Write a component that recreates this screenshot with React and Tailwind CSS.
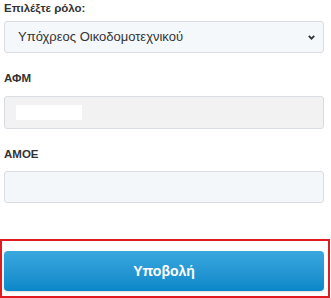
export default function App() {
  return (
    <div className="w-[331px] h-[298px] bg-white overflow-hidden" style={{ fontFamily: '"Liberation Sans", Arial, sans-serif' }}>
      <div className="px-1">
        <label className="block text-[11.5px] leading-[16px] font-bold text-[#333]">Επιλέξτε ρόλο:</label>
        <div className="relative mt-[5px] h-[32px] w-[320px] rounded-[3px] border border-[#d9dde1] bg-[#f5f8fb] flex items-center pl-[13px]">
          <span className="text-[13px] text-[#333]">Υπόχρεος Οικοδομοτεχνικού</span>
          <svg className="absolute right-[8px] top-[13px]" width="7" height="5" viewBox="0 0 7 5">
            <path d="M0.8 0.8 L3.5 3.6 L6.2 0.8" fill="none" stroke="#333" strokeWidth="1.8" />
          </svg>
        </div>

        <label className="mt-[17px] block text-[11.5px] leading-[16px] font-bold text-[#333]">ΑΦΜ</label>
        <div className="mt-[10px] h-[33px] w-[320px] rounded-[3px] border border-[#d9dde1] bg-[#f2f2f2] flex items-center pl-[11px]">
          <span className="block h-[15px] w-[66px] bg-white" />
        </div>

        <label className="mt-[17px] block text-[11.5px] leading-[16px] font-bold text-[#333]">ΑΜΟΕ</label>
        <div className="mt-[9px] h-[32px] w-[320px] rounded-[3px] border border-[#d9dde1] bg-[#f4f7fa]" />
      </div>

      <div className="mt-[36px] w-[330px] h-[59px] border-2 border-[#e21b22] pl-[2px] pt-[10px]">
        <button className="h-[40px] w-[320px] rounded-[4px] bg-gradient-to-b from-[#3aa8de] to-[#0787c9] text-white text-[14px] font-bold shadow-[0_1px_2px_rgba(0,0,0,0.15)]">
          Υποβολή
        </button>
      </div>
    </div>
  );
}
